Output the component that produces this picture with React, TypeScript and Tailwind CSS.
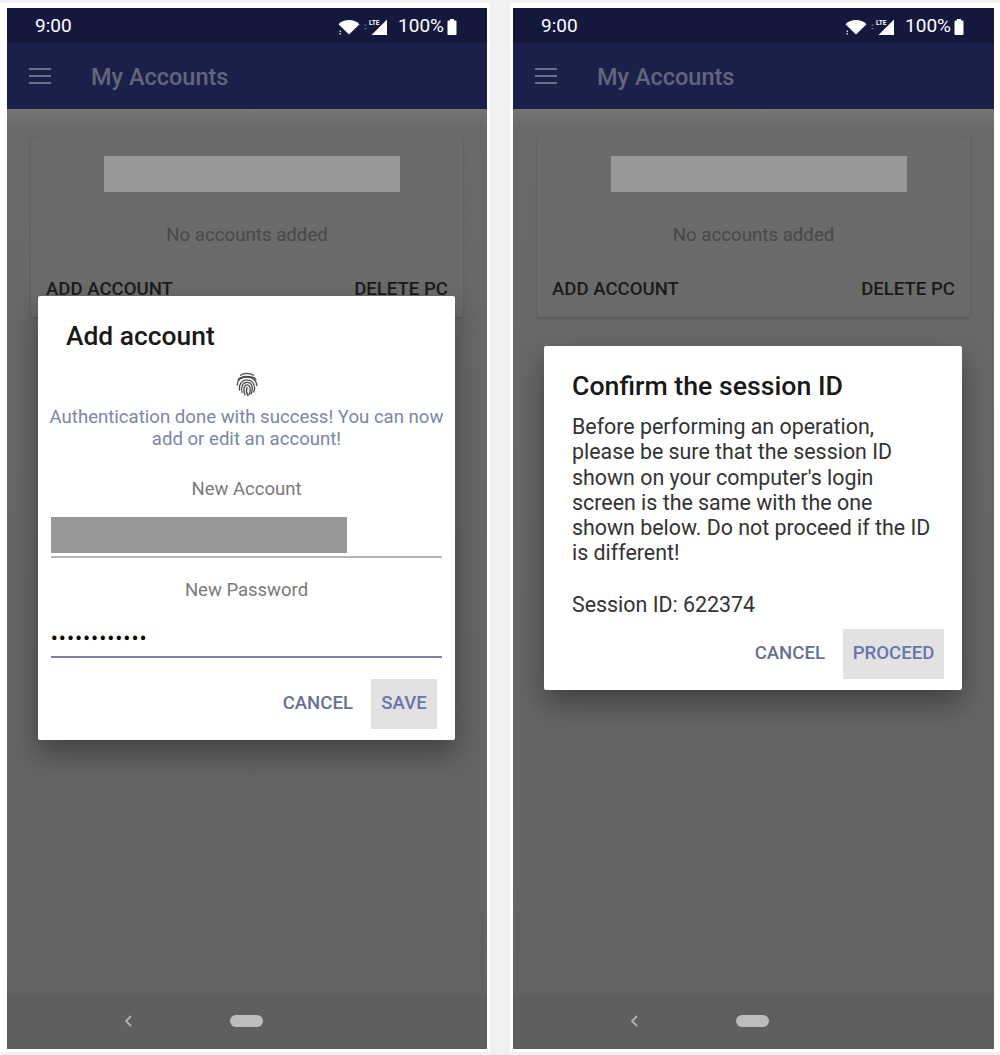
import type { ReactNode } from "react";

function Wifi() {
  return (
    <svg width="22" height="16" viewBox="0 0 22 16">
      <path d="M0.5 5.2C3.5 2.4 7 1 11 1s7.500 1.400 10.500 4.200L11 15.500z" fill="#fff" />
      <path d="M1.500 11.500h1.500v1.500h-1.500zM1.500 14h1.500v1.500h-1.500z" fill="#cfd2dc" />
    </svg>
  );
}

function Signal() {
  return (
    <svg width="25" height="18" viewBox="0 0 25 18">
      <path d="M24 1.500V17H8.500z" fill="#fff" />
      <path d="M1 7.500l1.500-1.500 1.500 1.500zM1 10l1.500 1.500L4 10z" fill="#6d7290" />
      <text x="6" y="6.500" fontSize="6.500" fontWeight="700" fill="#fff" fontFamily="Roboto, sans-serif">
        LTE
      </text>
    </svg>
  );
}

function Battery() {
  return (
    <svg width="10" height="16" viewBox="0 0 10 16">
      <path d="M3 0h4v1.500h1.500a1 1 0 0 1 1 1V15a1 1 0 0 1-1 1h-7a1 1 0 0 1-1-1V2.500a1 1 0 0 1 1-1H3z" fill="#fff" />
    </svg>
  );
}

function FingerprintMark() {
  return (
    <svg width="24" height="25" viewBox="0 0 24 25" fill="none" stroke="#4a4a4a" strokeWidth="1.300" strokeLinecap="round">
      <path d="M5.500 3.200C9 0.800 15 0.800 18.500 3.200" />
      <path d="M3 7.500C6 3.200 18 3.200 21 7.500" />
      <path d="M2.200 13C2.500 7.500 7 5.200 12 5.200s9.500 2.800 9.800 8.300" />
      <path d="M4.500 18C3.800 11.500 7.500 7.800 12 7.800s8 3.500 7.500 9.500c-0.100 1-0.400 2-0.800 2.700" />
      <path d="M7 20.500C5.800 15 7.500 10.300 12 10.300s6 4.200 5 9.200c-0.200 1-0.600 1.800-1 2.500" />
      <path d="M9.800 22.800C8 18 9 12.800 12 12.800s3.800 3.700 3 7c-0.300 1.200-0.700 2.300-1.300 3.200" />
      <path d="M12 15.500c-1 2.500-0.500 5.800 0.800 8" />
    </svg>
  );
}

function Phone({ children }: { children: ReactNode }) {
  return (
    <div className="relative flex h-[1041px] flex-col overflow-hidden bg-[#666666]">
      <div className="flex h-[35px] items-center justify-between bg-[#14183d] pl-7 pr-[30px] pt-[2px] text-white">
        <span className="text-[19px]">9:00</span>
        <div className="flex items-center">
          <Wifi />
          <span className="ml-[3px]">
            <Signal />
          </span>
          <span className="ml-[10px] text-[19px]">100%</span>
          <span className="ml-[3px] flex">
            <Battery />
          </span>
        </div>
      </div>
      <div className="flex h-[66px] items-center bg-[#1a2049] pl-[22px]">
        <div className="flex w-[22px] flex-col gap-[5px]">
          <div className="h-[2px] bg-[#6c7086]" />
          <div className="h-[2px] bg-[#6c7086]" />
          <div className="h-[2px] bg-[#6c7086]" />
        </div>
        <span className="ml-[40px] mt-[3px] text-[23.5px] font-medium text-[#62667e]">My Accounts</span>
      </div>
      <div className="flex-1 bg-gradient-to-b from-[#777474] from-0% via-[#6b6969] via-[2%] to-[#636363] px-6 pt-7">
        <div className="h-[180px] rounded-[3px] bg-[#6c6b6b] shadow-[0_1px_3px_rgba(0,0,0,0.2)]">
          <div className="flex flex-col items-center pt-[19px]">
            <div className="ml-[10px] h-9 w-[296px] bg-[#989898]" />
            <span className="mt-[29px] text-[18.7px] text-[#484848]">No accounts added</span>
          </div>
          <div className="mt-[15px] flex justify-between pl-[15px] pr-[15px] pt-[12px] text-[18.6px] font-medium text-[#1a1a1a]">
            <span>ADD ACCOUNT</span>
            <span>DELETE PC</span>
          </div>
        </div>
      </div>
      <div className="flex h-[54px] items-center bg-[#5f5f5f] pb-[3px] pl-[117px]">
        <svg width="9" height="12" viewBox="0 0 9 12" fill="none" stroke="#b4b4b4" strokeWidth="1.800">
          <path d="M7 1L2 6l5 5" />
        </svg>
        <div className="ml-[97px] h-3 w-[33px] rounded-md bg-[#bdbdbd]" />
      </div>
      {children}
    </div>
  );
}

export default function App() {
  return (
    <div className="flex h-[1055px] w-[1000px] justify-between bg-[#f1f1f1] pt-[3px] font-['Roboto',sans-serif]">
      <div className="h-[1049px] w-[490px] bg-white pl-[7px] pr-[3px] pt-[5px]">
        <Phone>
          <div className="absolute left-[31px] top-[288px] h-[444px] w-[417px] rounded-[2px] bg-white shadow-[0_14px_28px_rgba(0,0,0,0.35)]">
            <h2 className="ml-7 mt-[24px] text-[26.4px] leading-[32px] font-medium text-[#191919]">Add account</h2>
            <div className="mt-[20px] flex justify-center">
              <FingerprintMark />
            </div>
            <p className="mt-[9px] text-center text-[18.6px] leading-[22px] text-[#7c86a8]">
              Authentication done with success! You can now
              <br />
              add or edit an account!
            </p>
            <p className="mt-[28px] text-center text-[18.5px] leading-[22px] text-[#7a7a7a]">New Account</p>
            <div className="mx-[13px] mt-[17px] h-[41px] border-b-2 border-[#b4b4b4]">
              <div className="h-9 w-[296px] bg-[#989898]" />
            </div>
            <p className="mt-[21px] text-center text-[18.5px] leading-[22px] text-[#7a7a7a]">New Password</p>
            <div className="mx-[13px] mt-[15px] flex h-[42px] items-end border-b-2 border-[#7c7fa8] pb-[8px]">
              <span className="text-[18px] leading-none font-bold tracking-[1.600px] text-black">••••••••••••</span>
            </div>
            <div className="mr-[18px] mt-[21px] flex items-center justify-end">
              <span className="text-[18.6px] font-medium text-[#68718f]">CANCEL</span>
              <span className="ml-[18px] flex h-[50px] w-[66px] items-center justify-center bg-[#e2e2e2] text-[18.6px] font-medium text-[#6874ae]">
                SAVE
              </span>
            </div>
          </div>
        </Phone>
      </div>
      <div className="h-[1049px] w-[490px] bg-white pl-[3px] pr-[6px] pt-[5px]">
        <Phone>
          <div className="absolute left-[31px] top-[338px] h-[344px] w-[418px] rounded-[2px] bg-white shadow-[0_14px_28px_rgba(0,0,0,0.35)]">
            <h2 className="ml-7 mt-[24px] text-[26.7px] leading-[32px] font-medium text-[#191919]">Confirm the session ID</h2>
            <p className="ml-7 mt-[12px] text-[21.4px] leading-[25.3px] text-[#333333]">
              Before performing an operation,
              <br />
              please be sure that the session ID
              <br />
              shown on your computer's login
              <br />
              screen is the same with the one
              <br />
              shown below. Do not proceed if the ID
              <br />
              is different!
            </p>
            <p className="ml-7 mt-[26px] text-[21.4px] leading-[25px] text-[#333333]">Session ID: 622374</p>
            <div className="mr-[18px] mt-[12px] flex items-center justify-end">
              <span className="text-[18.6px] font-medium text-[#68718f]">CANCEL</span>
              <span className="ml-[18px] flex h-[50px] w-[101px] items-center justify-center bg-[#e2e2e2] text-[18.6px] font-medium text-[#6874ae]">
                PROCEED
              </span>
            </div>
          </div>
        </Phone>
      </div>
    </div>
  );
}
